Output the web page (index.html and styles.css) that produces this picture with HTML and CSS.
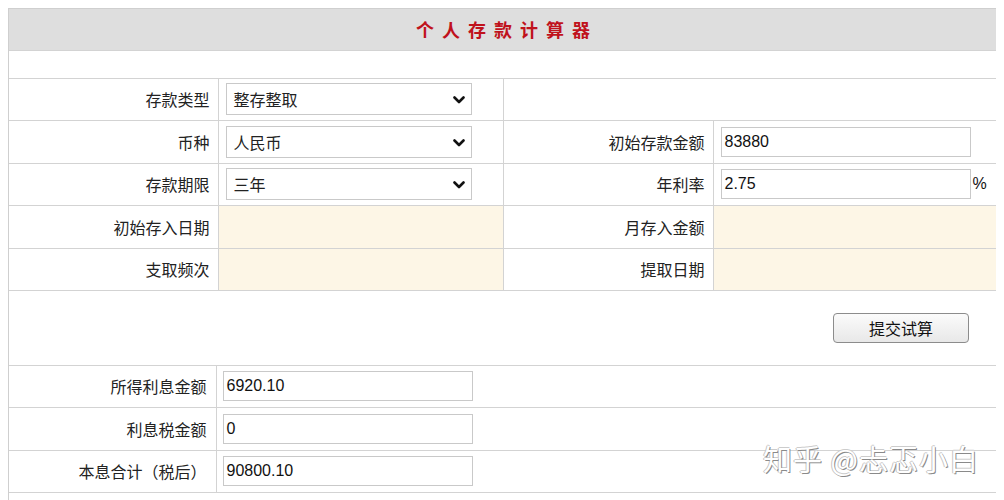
FILE: index.html
```html
<!DOCTYPE html>
<html lang="zh-CN">
<head>
<meta charset="utf-8">
<title>个人存款计算器</title>
<link rel="stylesheet" href="styles.css">
</head>
<body>
<div class="calc">
  <table class="grid top">
    <colgroup><col class="c1"><col class="c2"><col class="c3"><col class="c4"></colgroup>
    <tr class="title-row"><td colspan="4" class="title">个人存款计算器</td></tr>
    <tr class="spacer-row"><td colspan="4"></td></tr>
    <tr class="r42">
      <td class="label">存款类型</td>
      <td class="value"><div class="sel"><span class="sel-text">整存整取</span><svg class="chev" width="12" height="8" viewBox="0 0 12 8"><path d="M1.5 1.5 L6 6 L10.5 1.5" fill="none" stroke="#111" stroke-width="2.6" stroke-linecap="round" stroke-linejoin="round"/></svg></div></td>
      <td class="blank" colspan="2"></td>
    </tr>
    <tr class="r43">
      <td class="label">币种</td>
      <td class="value"><div class="sel"><span class="sel-text">人民币</span><svg class="chev" width="12" height="8" viewBox="0 0 12 8"><path d="M1.5 1.5 L6 6 L10.5 1.5" fill="none" stroke="#111" stroke-width="2.6" stroke-linecap="round" stroke-linejoin="round"/></svg></div></td>
      <td class="label">初始存款金额</td>
      <td class="value"><span class="inp">83880</span></td>
    </tr>
    <tr class="r42">
      <td class="label">存款期限</td>
      <td class="value"><div class="sel"><span class="sel-text">三年</span><svg class="chev" width="12" height="8" viewBox="0 0 12 8"><path d="M1.5 1.5 L6 6 L10.5 1.5" fill="none" stroke="#111" stroke-width="2.6" stroke-linecap="round" stroke-linejoin="round"/></svg></div></td>
      <td class="label">年利率</td>
      <td class="value"><span class="inp">2.75</span><span class="pct">%</span></td>
    </tr>
    <tr class="r43">
      <td class="label">初始存入日期</td>
      <td class="value beige"></td>
      <td class="label">月存入金额</td>
      <td class="value beige"></td>
    </tr>
    <tr class="r42">
      <td class="label">支取频次</td>
      <td class="value beige"></td>
      <td class="label">提取日期</td>
      <td class="value beige"></td>
    </tr>
    <tr class="btn-row">
      <td colspan="4" class="btn-cell"><span class="btn">提交试算</span></td>
    </tr>
  </table>
  <div class="results">
    <table class="grid bottom">
      <colgroup><col class="b1"><col class="b2"></colgroup>
      <tr class="r41">
        <td class="label">所得利息金额</td>
        <td class="value"><span class="inp">6920.10</span></td>
      </tr>
      <tr class="r43">
        <td class="label">利息税金额</td>
        <td class="value"><span class="inp">0</span></td>
      </tr>
      <tr class="r42">
        <td class="label">本息合计（税后）</td>
        <td class="value"><span class="inp">90800.10</span></td>
      </tr>
      <tr class="r42">
        <td colspan="2"></td>
      </tr>
    </table>
  </div>
  <div class="watermark">知乎 @忐忑小白</div>
</div>
</body>
</html>
```

FILE: styles.css
```css
html, body {
  background: #ffffff;
}
html {
  overflow: hidden;
}
body {
  margin: 8px;
  font-family: "Noto Sans CJK SC", "Noto Sans", sans-serif;
  font-size: 16px;
  color: #222;
}
.calc {
  position: relative;
  width: 990px;
  box-sizing: border-box;
  border: 1px solid #cfcfcf;
}
.grid {
  width: 100%;
  border-collapse: collapse;
  border-style: hidden;
  table-layout: fixed;
}
.grid td {
  border: 1px solid #d3d3d3;
  padding: 0;
  vertical-align: middle;
}
.results {
  border-top: 1px solid #d3d3d3;
}
.c1 { width: 209px; }
.c2 { width: 285px; }
.c3 { width: 210px; }
.c4 { width: 284px; }
.b1 { width: 207px; }
.title-row { height: 41px; }
.title {
  background: #dedede;
  color: #c0121c;
  font-weight: bold;
  font-size: 18px;
  letter-spacing: 8px;
  padding-left: 8px !important;
  text-align: center;
}
.spacer-row { height: 28px; }
.r41 { height: 41px; }
.r42 { height: 42px; }
.r43 { height: 43px; }
.label {
  text-align: right;
  padding-right: 8px !important;
  white-space: nowrap;
  line-height: 1;
}
.bottom .label { padding-right: 9px !important; }
.value {
  padding-left: 7px !important;
  white-space: nowrap;
}
.bottom .value { padding-left: 6px !important; }
.beige { background: #fdf6e6; }
.sel {
  position: relative;
  display: flex;
  align-items: center;
  width: 246px;
  height: 32px;
  box-sizing: border-box;
  border: 1px solid #c9c9c9;
  background: #fff;
  padding-left: 7px;
}
.sel-text {
  line-height: 1;
}
.chev {
  position: absolute;
  right: 6px;
  top: 12px;
}
.inp {
  display: inline-flex;
  align-items: center;
  vertical-align: middle;
  width: 250px;
  height: 30px;
  box-sizing: border-box;
  border: 1px solid #c9c9c9;
  background: #fff;
  padding-left: 3px;
  font-family: "Liberation Sans", Arial, sans-serif;
  font-size: 16px;
  color: #111;
}
.pct {
  display: inline-block;
  vertical-align: middle;
  margin-left: 2px;
  font-family: "Liberation Sans", Arial, sans-serif;
  font-size: 16px;
  color: #111;
}
.btn-row { height: 75px; }
.btn-cell {
  text-align: right;
  padding-right: 28px !important;
}
.btn {
  display: inline-flex;
  align-items: center;
  justify-content: center;
  width: 136px;
  height: 30px;
  box-sizing: border-box;
  border: 1px solid #8c8c8c;
  border-radius: 4px;
  background: linear-gradient(#fbfbfb, #e8e8e8);
  color: #111;
  font-size: 16px;
  line-height: 1;
}
.watermark {
  position: absolute;
  left: 754px;
  top: 428px;
  font-size: 29px;
  letter-spacing: 1px;
  color: #ffffff;
  text-shadow: 1px 1px 0 #8a8a8a, -1px 0 0 #c4c4c4, 0 -1px 0 #cccccc;
  white-space: nowrap;
}
```
